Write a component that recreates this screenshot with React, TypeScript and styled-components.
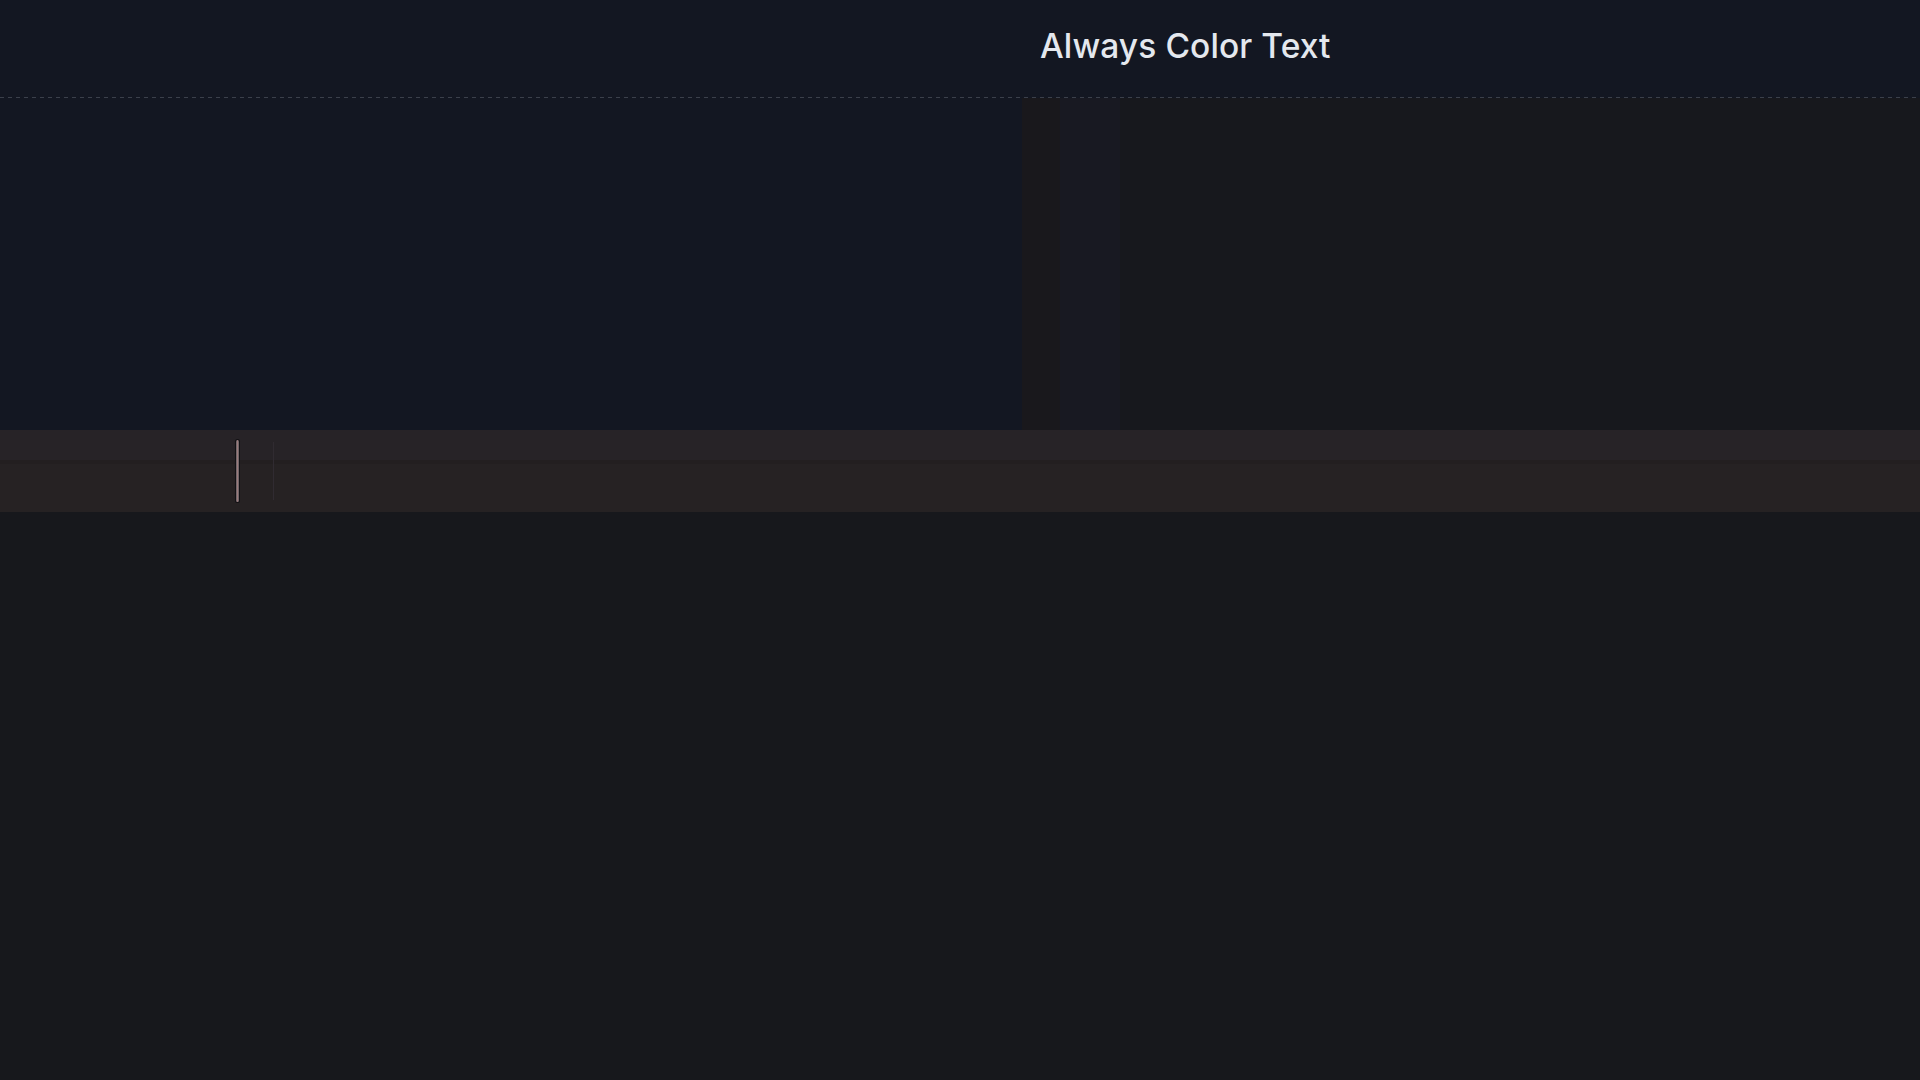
import React from 'react'
import styled, { createGlobalStyle } from 'styled-components'

const GlobalStyle = createGlobalStyle`
  html, body {
    margin: 0;
    padding: 0;
    background: #17181c;
  }
  #root {
    min-height: 100vh;
  }
`

const Page = styled.div`
  display: flex;
  flex-direction: column;
  width: 1920px;
  height: 1080px;
  overflow: hidden;
  background: #17181c;
  font-family: Inter, 'Noto Sans', sans-serif;
`

const Header = styled.header`
  display: grid;
  grid-template-columns: 1022px 1fr;
  height: 97px;
  background: #131722;
  background-image: repeating-linear-gradient(
    to right,
    #3b404b 0 4px,
    transparent 4px 8px
  );
  background-size: 100% 1px;
  background-position: left bottom;
  background-repeat: no-repeat;
  padding-bottom: 1px;
`

const Title = styled.h1`
  grid-column: 2;
  align-self: center;
  margin: 0 0 6px;
  padding-left: 18px;
  font-size: 33.5px;
  font-weight: 500;
  letter-spacing: 0.1px;
  color: #e4e8ee;
`

const Preview = styled.section`
  display: grid;
  grid-template-columns: 1022px 38px 60px 1fr;
  height: 332px;
`

const Column = styled.div<{ $tone: string }>`
  background: ${(p) => p.$tone};
`

const EditorLine = styled.div`
  display: flex;
  align-items: center;
  height: 82px;
  padding-left: 236px;
  gap: 34px;
  background: linear-gradient(
    to bottom,
    #272327 0,
    #272327 36%,
    #231f20 36%,
    #231f20 42%,
    #262223 42%
  );
`

const Caret = styled.span`
  display: block;
  width: 3px;
  height: 62px;
  border-radius: 2px;
  background: linear-gradient(to right, #5d5a60, #9a7b7b 50%, #5d5a60);
  box-shadow: 0 0 0 1px #121114;
`

const GhostCaret = styled.span`
  display: block;
  width: 1px;
  height: 58px;
  background: #302b31;
`

const Rest = styled.div`
  flex: 1;
  background: #17181c;
`

export default function App() {
  return (
    <>
      <GlobalStyle />
      <Page>
        <Header>
          <Title>Always Color Text</Title>
        </Header>
        <Preview>
          <Column $tone="#131722" />
          <Column $tone="#19181c" />
          <Column $tone="#181922" />
          <Column $tone="#17181d" />
        </Preview>
        <EditorLine>
          <Caret />
          <GhostCaret />
        </EditorLine>
        <Rest />
      </Page>
    </>
  )
}
